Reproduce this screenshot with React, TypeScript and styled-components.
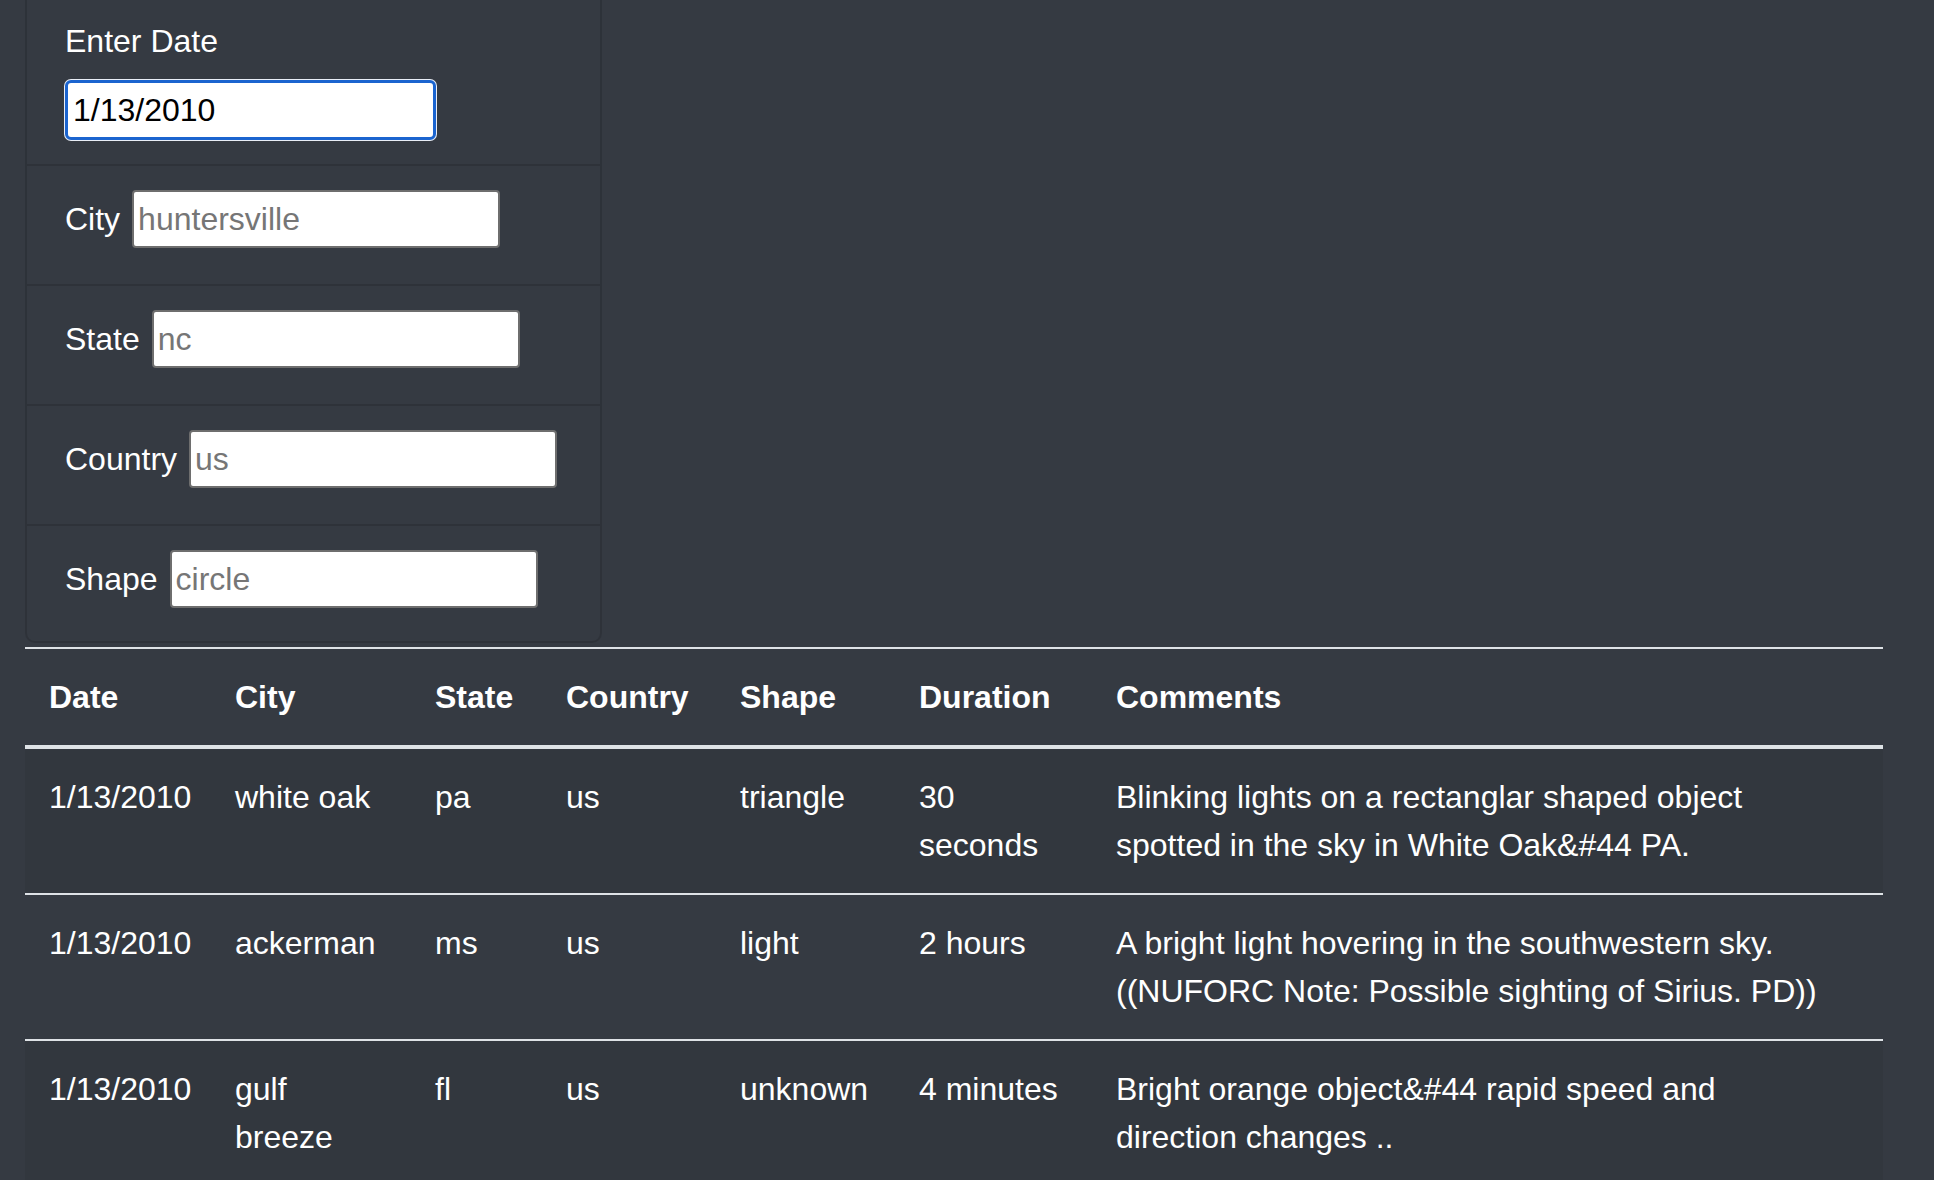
import React from 'react';
import styled, { createGlobalStyle } from 'styled-components';

const GlobalStyle = createGlobalStyle`
  body {
    margin: 0;
    background-color: #353a42;
    color: #fff;
    font-family: "Liberation Sans", Arial, sans-serif;
    font-size: 32px;
    line-height: 1.5;
  }
`;

const Page = styled.div`
  padding-left: 25px;
  width: 1858px;
`;

const FilterPanel = styled.ul`
  list-style: none;
  margin: 0;
  padding: 0;
  width: 573px;
  border: 2px solid rgba(0, 0, 0, 0.13);
  border-top: none;
  border-radius: 0 0 10px 10px;
`;

const FilterItem = styled.li<{ $first?: boolean }>`
  display: flex;
  flex-direction: ${({ $first }) => ($first ? 'column' : 'row')};
  align-items: ${({ $first }) => ($first ? 'flex-start' : 'center')};
  gap: ${({ $first }) => ($first ? '15px' : '12px')};
  padding: ${({ $first }) => ($first ? '17px 38px 24px' : '24px 38px 36px')};
  border-bottom: 2px solid rgba(0, 0, 0, 0.13);

  &:last-child {
    border-bottom: none;
    padding-bottom: 33px;
  }
`;

const Label = styled.label`
  color: #fff;
  white-space: nowrap;
`;

const TextInput = styled.input<{ $focused?: boolean }>`
  box-sizing: border-box;
  font-family: inherit;
  font-size: 32px;
  color: #000;
  background: #fff;
  margin: 0;
  outline: none;
  width: ${({ $focused }) => ($focused ? '371px' : '368px')};
  height: ${({ $focused }) => ($focused ? '60px' : '58px')};
  padding: ${({ $focused }) => ($focused ? '0 5px' : '0 4px')};
  border: ${({ $focused }) => ($focused ? '3px solid #1b64cf' : '2px solid #6e6e6e')};
  border-radius: ${({ $focused }) => ($focused ? '6px' : '4px')};
  box-shadow: ${({ $focused }) => ($focused ? '0 0 0 1px #e9eef6' : 'none')};

  &::placeholder {
    color: #767676;
  }
`;

const Table = styled.table`
  margin-top: 4px;
  width: 1858px;
  border-collapse: collapse;
  table-layout: fixed;
  color: #fff;
`;

const HeadCell = styled.th`
  text-align: left;
  font-weight: bold;
  padding: 24px;
  vertical-align: bottom;
  border-top: 2px solid #dee2e6;
  border-bottom: 4px solid #dee2e6;
`;

const Row = styled.tr`
  &:nth-child(odd) {
    background-color: rgba(0, 0, 0, 0.05);
  }
`;

const Cell = styled.td<{ $nowrap?: boolean; $wide?: boolean }>`
  padding: 24px;
  padding-right: ${({ $wide }) => ($wide ? '60px' : '24px')};
  vertical-align: top;
  border-top: 2px solid #dee2e6;
  white-space: ${({ $nowrap }) => ($nowrap ? 'nowrap' : 'normal')};
`;

const columns = [
  { title: 'Date', width: 186 },
  { title: 'City', width: 200 },
  { title: 'State', width: 131 },
  { title: 'Country', width: 174 },
  { title: 'Shape', width: 179 },
  { title: 'Duration', width: 197 },
  { title: 'Comments', width: 791 },
];

const sightings = [
  {
    date: '1/13/2010',
    city: 'white oak',
    state: 'pa',
    country: 'us',
    shape: 'triangle',
    duration: '30 seconds',
    comments: 'Blinking lights on a rectanglar shaped object spotted in the sky in White Oak&#44 PA.',
  },
  {
    date: '1/13/2010',
    city: 'ackerman',
    state: 'ms',
    country: 'us',
    shape: 'light',
    duration: '2 hours',
    comments: 'A bright light hovering in the southwestern sky. ((NUFORC Note: Possible sighting of Sirius. PD))',
  },
  {
    date: '1/13/2010',
    city: 'gulf breeze',
    state: 'fl',
    country: 'us',
    shape: 'unknown',
    duration: '4 minutes',
    comments: 'Bright orange object&#44 rapid speed and direction changes ..',
  },
];

const filters = [
  { label: 'City', placeholder: 'huntersville' },
  { label: 'State', placeholder: 'nc' },
  { label: 'Country', placeholder: 'us' },
  { label: 'Shape', placeholder: 'circle' },
];

const App = () => {
  return (
    <Page>
      <GlobalStyle />
      <FilterPanel>
        <FilterItem $first>
          <Label htmlFor="datetime">Enter Date</Label>
          <TextInput id="datetime" type="text" defaultValue="1/13/2010" $focused />
        </FilterItem>
        {filters.map((f) => (
          <FilterItem key={f.label}>
            <Label htmlFor={f.label.toLowerCase()}>{f.label}</Label>
            <TextInput id={f.label.toLowerCase()} type="text" placeholder={f.placeholder} />
          </FilterItem>
        ))}
      </FilterPanel>
      <Table>
        <colgroup>
          {columns.map((c) => (
            <col key={c.title} style={{ width: c.width }} />
          ))}
        </colgroup>
        <thead>
          <tr>
            {columns.map((c) => (
              <HeadCell key={c.title}>{c.title}</HeadCell>
            ))}
          </tr>
        </thead>
        <tbody>
          {sightings.map((s, i) => (
            <Row key={i}>
              <Cell $nowrap>{s.date}</Cell>
              <Cell>{s.city}</Cell>
              <Cell>{s.state}</Cell>
              <Cell>{s.country}</Cell>
              <Cell>{s.shape}</Cell>
              <Cell>{s.duration}</Cell>
              <Cell $wide>{s.comments}</Cell>
            </Row>
          ))}
        </tbody>
      </Table>
    </Page>
  );
};

export default App;
